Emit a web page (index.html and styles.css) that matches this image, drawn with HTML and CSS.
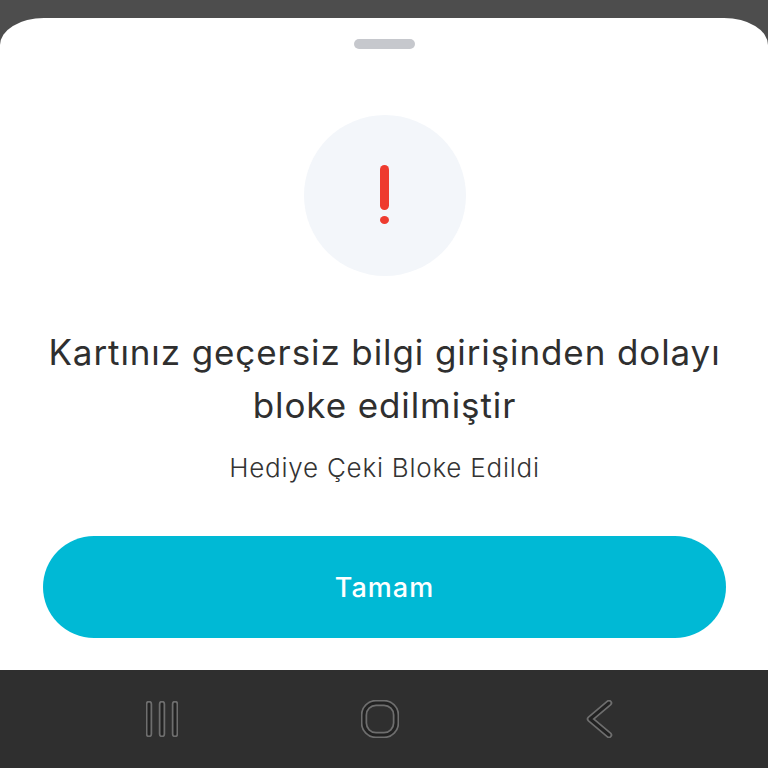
FILE: index.html
```html
<!DOCTYPE html>
<html lang="tr">
<head>
<meta charset="utf-8">
<title>Hediye Çeki Bloke Edildi</title>
<link rel="stylesheet" href="styles.css">
</head>
<body>
<div class="screen">
  <section class="sheet">
    <div class="handle"></div>
    <div class="alert-badge">
      <span class="alert-bar"></span>
      <span class="alert-dot"></span>
    </div>
    <h1 class="title">Kartınız geçersiz bilgi girişinden dolayı bloke edilmiştir</h1>
    <p class="subtitle">Hediye Çeki Bloke Edildi</p>
    <button class="primary" type="button">Tamam</button>
  </section>
  <nav class="navbar">
    <svg class="nav-icon nav-recents" viewBox="0 0 32 36" fill="none" stroke-linecap="round" stroke-linejoin="round">
      <path class="edge" d="M3 3V33M16 3V33M29 3V33"/>
      <path class="core" d="M3 3V33M16 3V33M29 3V33"/>
    </svg>
    <svg class="nav-icon nav-home" viewBox="0 0 38 38" fill="none">
      <rect class="edge" x="3" y="3" width="32" height="32" rx="12"/>
      <rect class="core" x="3" y="3" width="32" height="32" rx="12"/>
    </svg>
    <svg class="nav-icon nav-back" viewBox="0 0 28 38" fill="none" stroke-linecap="round" stroke-linejoin="round">
      <path class="edge" d="M23 3L4 19L23 35"/>
      <path class="core" d="M23 3L4 19L23 35"/>
    </svg>
  </nav>
</div>
</body>
</html>
```
FILE: styles.css
```css
* {
  box-sizing: border-box;
}

html,
body {
  margin: 0;
  height: 100%;
}

body {
  background: #4d4d4d;
  font-family: "Inter", "Lato", sans-serif;
}

.screen {
  display: flex;
  flex-direction: column;
  height: 768px;
  padding-top: 18px;
}

.sheet {
  flex: 1;
  display: flex;
  flex-direction: column;
  align-items: center;
  padding: 21px 42px 32px 43px;
  background: #fff;
  border-radius: 44px 44px 0 0 / 27px 27px 0 0;
}

.handle {
  width: 61px;
  height: 10px;
  border-radius: 5px;
  background: #c6c8cd;
}

.alert-badge {
  display: flex;
  flex-direction: column;
  align-items: center;
  gap: 6px;
  width: 162px;
  height: 161px;
  margin-top: 66px;
  padding-top: 50px;
  border-radius: 50%;
  background: #f3f6fa;
}

.alert-bar {
  width: 9px;
  height: 45px;
  border-radius: 5px;
  background: #ee3b2f;
}

.alert-dot {
  width: 9px;
  height: 8px;
  border-radius: 50%;
  background: #ee3b2f;
}

.title {
  width: 100%;
  margin: 50px 0 0;
  font-size: 35px;
  font-weight: 430;
  line-height: 53px;
  letter-spacing: 0.9px;
  text-align: center;
  color: #2f2f2f;
}

.subtitle {
  margin: 18px 0 0;
  font-size: 26px;
  font-weight: 300;
  line-height: 36px;
  letter-spacing: 0.76px;
  color: #333;
}

.primary {
  width: 100%;
  height: 102px;
  margin-top: auto;
  border: 0;
  border-radius: 51px;
  background: #00b9d5;
  font-family: inherit;
  font-size: 27px;
  font-weight: 500;
  letter-spacing: 1px;
  color: #fff;
}

.navbar {
  display: flex;
  align-items: center;
  height: 98px;
  padding-left: 146px;
  background: #2f2f2f;
}

.nav-icon {
  flex: none;
  display: block;
}

.nav-recents {
  width: 32px;
  height: 36px;
}

.nav-home {
  width: 38px;
  height: 38px;
  margin-left: 183px;
}

.nav-back {
  width: 28px;
  height: 38px;
  margin-left: 187px;
}

.edge {
  stroke: #6e6e6e;
  stroke-width: 6.5;
}

.core {
  stroke: #222;
  stroke-width: 3;
}
```
